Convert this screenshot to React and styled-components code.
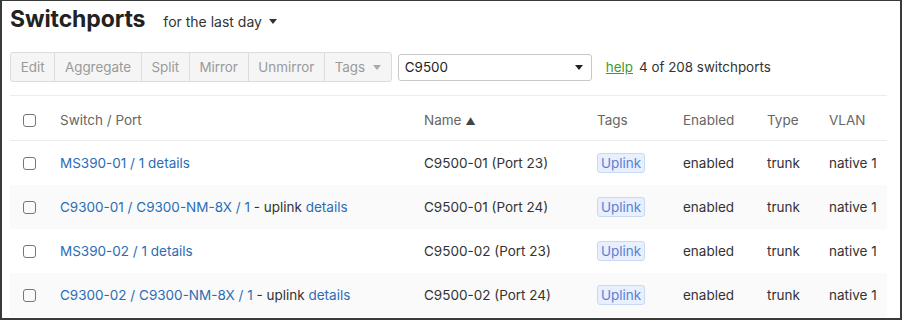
import React from 'react'
import styled, { createGlobalStyle } from 'styled-components'

const Global = createGlobalStyle`
  html, body { margin: 0; padding: 0; background: #fff; }
  body { font-family: Inter, "Noto Sans", sans-serif; color: #333; }
`

const rows = [
  { sw: 'MS390-01 / 1', uplink: false, name: 'C9500-01 (Port 23)' },
  { sw: 'C9300-01 / C9300-NM-8X / 1', uplink: true, name: 'C9500-01 (Port 24)' },
  { sw: 'MS390-02 / 1', uplink: false, name: 'C9500-02 (Port 23)' },
  { sw: 'C9300-02 / C9300-NM-8X / 1', uplink: true, name: 'C9500-02 (Port 24)' },
]

const Caret = ({ color = '#444' }) => (
  <svg width="8" height="5" viewBox="0 0 8 5">
    <path d="M0 0h8L4 5z" fill={color} />
  </svg>
)

const App = () => {
  return (
    <Frame>
      <Global />
      <Header>
        <Title>Switchports</Title>
        <Period>
          for the last day <Caret color="#333" />
        </Period>
      </Header>
      <Toolbar>
        <ButtonGroup>
          <Btn>Edit</Btn>
          <Btn>Aggregate</Btn>
          <Btn>Split</Btn>
          <Btn>Mirror</Btn>
          <Btn>Unmirror</Btn>
          <Btn>
            Tags <Caret color="#aaa" />
          </Btn>
        </ButtonGroup>
        <Select>
          <span>C9500</span>
          <Caret color="#222" />
        </Select>
        <Help href="#">help</Help>
        <Count>4 of 208 switchports</Count>
      </Toolbar>
      <Table>
        <HeadRow>
          <Cell><Check /></Cell>
          <Cell>Switch / Port</Cell>
          <Cell>Name<Sort>▲</Sort></Cell>
          <Cell>Tags</Cell>
          <Cell>Enabled</Cell>
          <Cell>Type</Cell>
          <Cell>VLAN</Cell>
        </HeadRow>
        {rows.map((r, i) => (
          <Row key={i} striped={i % 2 === 1}>
            <Cell><Check /></Cell>
            <Cell>
              <Link>{r.sw}</Link>
              {r.uplink ? ' - uplink ' : ' '}
              <Link>details</Link>
            </Cell>
            <Cell>{r.name}</Cell>
            <Cell><Badge>Uplink</Badge></Cell>
            <Cell>enabled</Cell>
            <Cell>trunk</Cell>
            <Cell>native 1</Cell>
          </Row>
        ))}
      </Table>
    </Frame>
  )
}

export default App

const Frame = styled.div`
  box-sizing: border-box;
  width: 902px;
  height: 320px;
  border: 2px solid #3a3a3a;
  border-top-width: 1px;
  padding: 0 12px 0 8px;
  overflow: hidden;
`

const Header = styled.div`
  display: flex;
  align-items: baseline;
  gap: 18px;
  height: 44px;
  padding-top: 4px;
  box-sizing: border-box;
`

const Title = styled.div`
  font-weight: 700;
  font-size: 23px;
  color: #222;
  letter-spacing: -0.1px;
`

const Period = styled.div`
  font-size: 14px;
  color: #333;
  display: flex;
  align-items: center;
  gap: 7px;
`

const Toolbar = styled.div`
  display: flex;
  align-items: center;
  height: 28px;
  margin-top: 8px;
  font-size: 13.4px;
`

const ButtonGroup = styled.div`
  display: flex;
  height: 28px;
  border: 1px solid #dcdcdc;
  border-radius: 3px;
  background: #f5f5f5;
  overflow: hidden;
`

const Btn = styled.div`
  display: flex;
  align-items: center;
  gap: 8px;
  padding: 0 9.7px;
  color: #9a9a9a;
  border-left: 1px solid #dcdcdc;
  &:first-child { border-left: none; }
`

const Select = styled.div`
  box-sizing: border-box;
  width: 194px;
  height: 27px;
  margin-left: 6px;
  border: 1px solid #c8c8c8;
  border-radius: 3px;
  display: flex;
  align-items: center;
  justify-content: space-between;
  padding: 0 8px 0 6px;
  color: #222;
`

const Help = styled.a`
  margin-left: 14px;
  color: #3f9a2f;
  text-decoration: underline;
`

const Count = styled.span`
  margin-left: 6px;
  color: #333;
`

const Table = styled.div`
  margin-top: 14px;
  width: 877px;
  border-top: 1px solid #ececec;
`

const HeadRow = styled.div`
  display: grid;
  grid-template-columns: 50px 364px 173px 86px 84px 62px 1fr;
  align-items: center;
  height: 45px;
  box-sizing: border-box;
  padding-top: 4px;
  border-bottom: 1px solid #ececec;
  font-size: 13.5px;
  color: #666;
`

const Row = styled(HeadRow)`
  height: 44px;
  padding-top: 0;
  color: #333;
  background: ${({ striped }) => (striped ? '#fafafa' : '#fff')};
  border-bottom: none;
`

const Cell = styled.div`
  white-space: pre;
  &:first-child { padding-left: 13px; display: flex; align-items: center; }
`

const Check = styled.div`
  width: 11px;
  height: 11px;
  border: 1.5px solid #777;
  border-radius: 3px;
`

const Sort = styled.span`
  font-size: 10px;
  margin-left: 4px;
  color: #444;
`

const Link = styled.span`
  color: #2a6db5;
`

const Badge = styled.span`
  display: inline-block;
  background: #e9f0fd;
  border: 1px solid #c9d8f5;
  border-radius: 3px;
  color: #5b7fd6;
  padding: 1px 3px;
`
